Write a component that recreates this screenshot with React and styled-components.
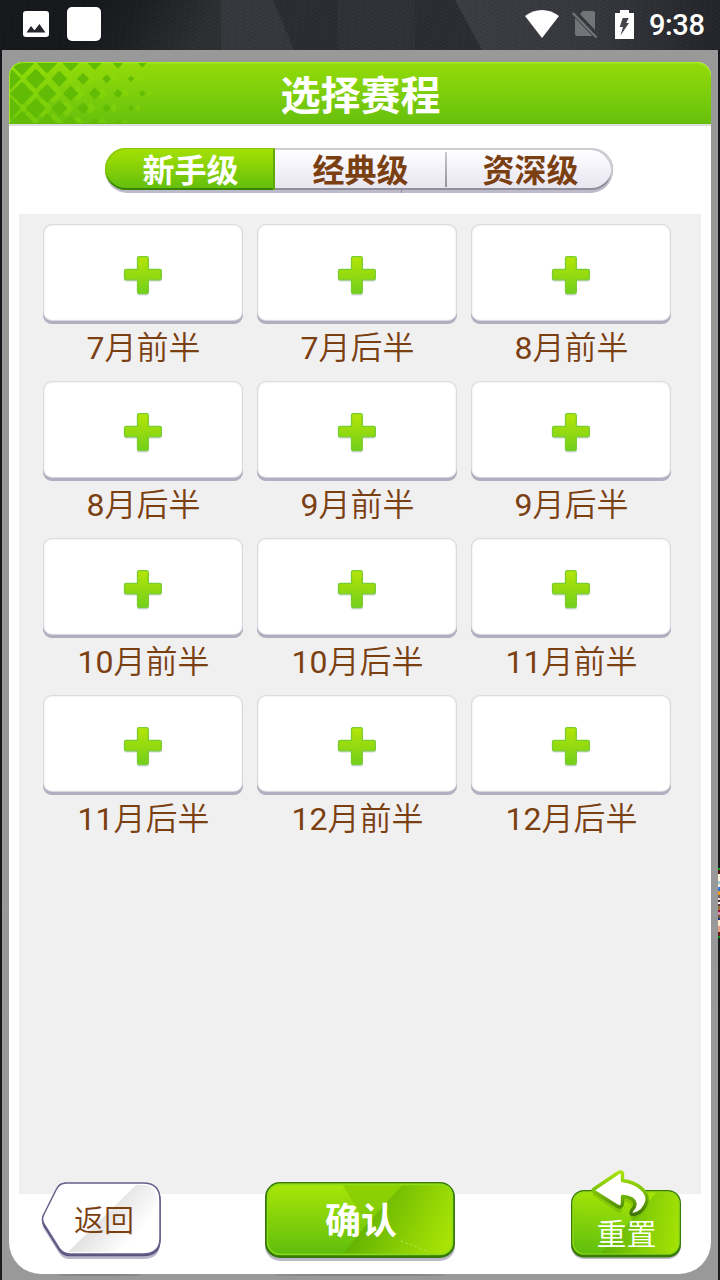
import React from "react";
import styled, { createGlobalStyle, css } from "styled-components";

const GlobalStyle = createGlobalStyle`
  *, *::before, *::after { box-sizing: border-box; }
  html, body { margin: 0; padding: 0; height: 1280px; overflow: hidden; background: #15161b; }
  body { font-family: Roboto, "Noto Sans CJK SC", sans-serif; color: #7b4012; }
  button { font: inherit; color: inherit; border: 0; padding: 0; background: none; }
`;

const Screen = styled.div`
  position: relative;
  width: 720px;
  height: 1280px;
  display: flex;
  flex-direction: column;
  overflow: hidden;
  background:
    repeating-linear-gradient(178deg, rgba(255,255,255,.03) 0 1px, transparent 1px 4px),
    linear-gradient(#15161b, #18191c);
`;

const StatusBar = styled.header`
  position: relative;
  height: 50px;
  flex: none;
  display: flex;
  align-items: center;
  justify-content: space-between;
  padding: 0 17px 2px 23px;
`;

const Wallpaper = styled.svg`
  position: absolute;
  inset: 0;
`;

const StatusGroup = styled.div`
  position: relative;
  display: flex;
  align-items: center;
  gap: ${(p) => p.$gap}px;
`;

const AppTile = styled.span`
  width: 34px;
  height: 34px;
  border-radius: 5px;
  background: #fff;
`;

const Clock = styled.time`
  width: 54px;
  margin-left: 5px;
  padding-top: 2px;
  font: 500 29px/34px Roboto, sans-serif;
  letter-spacing: -.4px;
  color: #fff;
  white-space: nowrap;
`;

const Backdrop = styled.main`
  flex: 1;
  margin: 0 2px;
  padding: 12px 7px 6px;
  display: flex;
  background: #999;
`;

const Dialog = styled.section`
  flex: 1;
  display: flex;
  flex-direction: column;
  overflow: hidden;
  border-radius: 14px 14px 32px 32px;
  background: #fff;
`;

const TitleBar = styled.div`
  position: relative;
  height: 62px;
  flex: none;
  display: flex;
  justify-content: center;
  border-radius: 14px 14px 0 0;
  background: linear-gradient(#94dc09, #67c00d);
  box-shadow: inset 0 1px #a9ef20, inset 0 2px 1px #9ce316, inset 0 -1px #62b80e, 0 2px #dedede;
`;

const TitlePattern = styled.svg`
  position: absolute;
  inset: 0 auto auto 0;
  border-top-left-radius: 14px;
`;

const Title = styled.h1`
  position: relative;
  margin: 0;
  padding: 3px 0 0 1px;
  font-size: 40px;
  line-height: 64px;
  font-weight: 700;
  color: #fff;
`;

const Tabs = styled.nav`
  position: relative;
  height: 45px;
  width: 508px;
  flex: none;
  margin: 24px 0 0 96px;
  padding-bottom: 3px;
  display: flex;
  border-radius: 23px;
  background: #bdbacb;

  &::after {
    content: "";
    position: absolute;
    left: 296px;
    bottom: 0;
    width: 1px;
    height: 3px;
    background: #8d8b99;
  }
`;

const Tab = styled.button`
  position: relative;
  width: ${(p) => p.$width}px;
  height: 42px;
  padding-top: 4px;
  font-size: 32px;
  line-height: 38px;
  font-weight: 700;
  background: linear-gradient(#fff, #f7f6fb 35%, #e6e4ee);
  box-shadow: inset 0 2px #cecdd3, inset 0 -2px #918f9c;

  ${(p) => p.$active && css`
    color: #fff;
    padding-left: 1px;
    border-radius: 21px 0 0 21px;
    background: linear-gradient(#a3e106, #93d706 30%, #60bd0d);
    box-shadow: inset 1px 1px #87c506, inset -2px 0 #5eaa0b, inset 0 -2px #398406;
  `}

  ${(p) => p.$divided && css`
    &::after {
      content: "";
      position: absolute;
      right: -1px;
      top: 4px;
      z-index: 1;
      width: 2px;
      height: 35px;
      background: linear-gradient(#cbcad2, #94929b);
    }
  `}

  ${(p) => p.$last && css`
    padding-left: 2px;
    border-radius: 0 21px 21px 0;
    box-shadow: inset -2px 2px #cecdd3, inset -1px -2px #918f9c;
  `}
`;

const Schedule = styled.div`
  height: 980px;
  flex: none;
  margin: 21px 10px 0;
  padding: 10px 30px 0 24px;
  display: grid;
  grid-template-columns: repeat(3, 200px);
  grid-auto-rows: 157px;
  align-content: start;
  column-gap: 14px;
  background: #f0f0f0;
`;

const Slot = styled.div`
  display: flex;
  flex-direction: column;
  align-items: center;
`;

const SlotCard = styled.button`
  width: 200px;
  height: 100px;
  padding-top: 3px;
  display: flex;
  align-items: center;
  justify-content: center;
  border-radius: 9px;
  background: #fff;
  box-shadow: inset 0 -3px #b1aebf, inset 0 -4px 1px #d4d2dc, inset 0 0 0 1px #dcdcdc, inset 0 0 2px 1px #dcdcdc;
`;

const SlotLabel = styled.div`
  height: 57px;
  padding-left: 1px;
  font-size: 32px;
  line-height: 49px;
  font-weight: 350;
  white-space: nowrap;
`;

const MonthNumber = styled.span`
  font-weight: 400;
`;

const Footer = styled.footer`
  flex: 1;
  position: relative;
  display: grid;
  grid-template-columns: 224px 306px 110px;
  align-items: start;
  padding-left: 32px;
`;

const Action = styled.button`
  position: relative;
  width: ${(p) => p.$width}px;
  height: ${(p) => p.$height}px;
  margin-top: ${(p) => p.$top}px;

  > svg {
    display: block;
    overflow: visible;
  }
`;

const ActionLabel = styled.span`
  position: absolute;
  left: ${(p) => p.$x || 0}px;
  right: 0;
  top: ${(p) => p.$y}px;
  text-align: center;
  font-size: ${(p) => p.$size}px;
  line-height: 40px;
  font-weight: ${(p) => p.$weight || 350};
  color: ${(p) => p.$color || "#fff"};
`;

const BottomShade = styled.span`
  position: absolute;
  left: ${(p) => p.$left}px;
  bottom: 4px;
  width: ${(p) => p.$width}px;
  height: 2px;
  border-radius: 50%;
  background: #858585;
`;

const EdgeSprite = styled.div`
  position: absolute;
  right: 0;
  top: 868px;
  width: 2px;
  height: 70px;
  background: linear-gradient(
    #00a519 0 2px, #501515 2px 6px, #fff5dd 6px 13px, #9bc6d2 13px 16px,
    #f8f1e2 16px 19px, #3475d2 19px 23px, #f29a11 23px 27px, #725861 27px 30px,
    #ead8cf 30px 32px, #48272d 32px 34px, #fff 34px 36px, #573638 36px 38px,
    #9f6c38 38px 42px, #990e3b 42px 44px, #d68ba1 44px 47px, #744f35 47px 50px,
    #17348e 50px 52px, #ffe9d1 52px 58px, #e39c84 58px 64px, #631a14 64px 68px,
    #009a19 68px
  );
`;

function WallpaperFacets() {
  return (
    <Wallpaper width="720" height="50" viewBox="0 0 720 50">
      <defs>
        <linearGradient id="wallLeft" gradientUnits="userSpaceOnUse" x1="95" y1="0" x2="190" y2="55">
          <stop stopColor="#16171b" />
          <stop offset=".4" stopColor="#1d1e22" />
          <stop offset="1" stopColor="#2c2e32" />
        </linearGradient>
        <linearGradient id="wallRight">
          <stop stopColor="#3b3d42" />
          <stop offset=".55" stopColor="#35373c" />
          <stop offset="1" stopColor="#222429" />
        </linearGradient>
        <pattern id="weave" width="7" height="4" patternUnits="userSpaceOnUse" patternTransform="rotate(4)">
          <path d="M0 .5H4M3 2.5H7" stroke="#fff" opacity=".025" />
          <path d="M4 1.5H6M0 3.5H2" stroke="#000" opacity=".12" />
        </pattern>
      </defs>
      <rect width="720" height="50" fill="#2b2c31" />
      <path d="M0 0H221V50H0z" fill="url(#wallLeft)" />
      <path d="M221 0H273L294 50H221z" fill="#35373c" />
      <path d="M338 0H415V50H338z" fill="#303136" />
      <path d="M455 0H720V50H482z" fill="url(#wallRight)" />
      <rect width="720" height="50" fill="url(#weave)" />
    </Wallpaper>
  );
}

const diamonds = [
  [22, 31.5, 11.7], [47, 31.5, 9.5], [70.7, 31.5, 7.7], [94.7, 31.5, 6], [118, 31.5, 4.6], [142.3, 31.5, 3.2],
  [10, 16.8, 11], [35.7, 16.8, 10], [59.3, 16.8, 8], [83, 16.8, 6], [106.7, 16.8, 4.5], [131, 16.8, 3.1],
  [10, 46.3, 11], [35.7, 46.3, 10], [59.3, 46.3, 8], [83, 46.3, 6], [106.7, 46.3, 4.2], [131, 46.3, 3],
  [22, 1.5, 12], [47, 1.5, 10], [70.7, 1.5, 8], [94.7, 1.5, 6.5], [118, 1.5, 5], [142.3, 1.5, 4],
  [22, 61, 12], [47, 61, 9.5], [70.7, 61, 7], [94.7, 61, 5], [118, 61, 3.5],
];

const diamondPath = (x, y, r) => `M${x - 9} ${y - r}l${r} ${r}l${-r} ${r}l${-r} ${-r}z`;

function DiamondPattern() {
  return (
    <TitlePattern width="160" height="61" viewBox="0 0 160 61">
      {diamonds.map(([x, y, r], i) => (
        <path key={`glow-${i}`} d={diamondPath(x + 7, y, r)} fill="#8edf09" opacity=".35" />
      ))}
      {diamonds.map(([x, y, r], i) => (
        <path key={i} d={diamondPath(x, y, r)} fill="#62bb04" />
      ))}
      <path d="M.5 62V14A13.5 13.5 0 0 1 14 .5H160" fill="none" stroke="#a0e91a" />
    </TitlePattern>
  );
}

function PictureIcon() {
  return (
    <svg width="26" height="26" viewBox="0 0 26 26">
      <rect width="26" height="26" rx="3" fill="#fff" />
      <path d="M3.5 21.5 8 15l3.5 4.3L16.4 13l6.1 8.5z" fill="#24262b" />
    </svg>
  );
}

function WifiIcon() {
  return (
    <svg width="34" height="28" viewBox="0 0 34 28">
      <path d="M0 6C10-2 24-2 34 6L17 28z" fill="#fff" />
    </svg>
  );
}

function NoSimIcon() {
  return (
    <svg width="26" height="28" viewBox="0 0 26 28">
      <path d="M8 4 11 1H21a2 2 0 0 1 2 2V20zM3 8 20.5 26H5a2 2 0 0 1-2-2z" fill="#737478" />
      <path d="m.8 3 23.7 24.5" stroke="#737478" strokeWidth="2.2" />
    </svg>
  );
}

function BatteryIcon() {
  return (
    <svg width="19" height="29" viewBox="0 0 19 29">
      <path d="M5 0H14V3H19V29H0V3H5z" fill="#fff" />
      <path d="M7.7 8H13.7L11.2 13H14L5.5 25.5 8 17H4.7z" fill="#44464b" />
    </svg>
  );
}

function PlusIcon() {
  return (
    <svg width="40" height="42" viewBox="0 0 40 42">
      <defs>
        <linearGradient id="plusFill" x2="0" y2="1">
          <stop stopColor="#b5e506" />
          <stop offset="1" stopColor="#72cf1b" />
        </linearGradient>
      </defs>
      <path d="M15.5 2H24Q26 2 26 4V14H37Q39 14 39 16V24Q39 26.5 37 26.5H26V38Q26 40.5 24 40.5H16Q14 40.5 14 38V26.5H3Q1 26.5 1 24V16Q1 14 3 14H14V4Q14 2 16 2z" fill="#d3d8e2" />
      <path d="M16 1.7H23.6Q25.3 1.7 25.3 3.4V14.3H36.7Q38.3 14.3 38.3 16V23Q38.3 24.8 36.7 24.8H25.3V36.8Q25.3 38.5 23.6 38.5H16Q14.5 38.5 14.5 36.8V24.8H3.2Q1.5 24.8 1.5 23V16Q1.5 14.3 3.2 14.3H14.5V3.4Q14.5 1.7 16 1.7z" fill="url(#plusFill)" stroke="#79cd30" strokeWidth="1.3" />
    </svg>
  );
}

function BackShape() {
  const d = "M23 1H102Q119 1 119 18V56Q119 72 102 72H29Q22 72 18 66L3 42Q0 37 3 32L15 8Q18 1 25 1z";
  return (
    <svg width="120" height="80" viewBox="0 0 120 80">
      <defs>
        <linearGradient id="backShine" gradientUnits="userSpaceOnUse" x1="55" y1="30" x2="90" y2="60">
          <stop stopColor="#dedede" />
          <stop offset="1" stopColor="#fff" />
        </linearGradient>
      </defs>
      <path d={d} transform="translate(0 5)" fill="#b9b5cb" />
      <path d={d} transform="translate(0 1.5)" fill="#5a537a" stroke="#5a537a" strokeWidth="1.5" />
      <path d={d} fill="#fff" stroke="#66608a" strokeWidth="1.5" />
      <path d="M95 3H104Q116 4 116 18V55Q116 70 102 70H27z" fill="url(#backShine)" />
    </svg>
  );
}

function ConfirmShape() {
  return (
    <svg width="190" height="80" viewBox="0 0 190 80">
      <defs>
        <linearGradient id="confirmBase" x2="0" y2="1">
          <stop stopColor="#a9e607" />
          <stop offset="1" stopColor="#5fbd0d" />
        </linearGradient>
        <linearGradient id="confirmRight" gradientUnits="userSpaceOnUse" x1="102" y1="25" x2="184" y2="60">
          <stop stopColor="#65b402" />
          <stop offset="1" stopColor="#a9e405" />
        </linearGradient>
      </defs>
      <rect x="0" y="5" width="190" height="74" rx="15" fill="#bbb7ca" />
      <rect width="190" height="76" rx="15" fill="#377807" />
      <rect x="2" y="1.5" width="186" height="71.5" rx="13" fill="url(#confirmBase)" />
      <path d="M138 2H176Q188 3 188 15V60Q188 72 175 73H77L102 42z" fill="url(#confirmRight)" />
      <path d="M77 2H138L102 42z" fill="#81c802" opacity=".65" />
      <rect x="2.5" y="2.5" width="185" height="70" rx="12.5" fill="none" stroke="#8bdc1a" strokeWidth="1.5" />
      <path d="m136 59 24 9 4 3" fill="none" stroke="#cdf194" strokeWidth=".7" strokeDasharray="2 3" />
    </svg>
  );
}

function ResetShape() {
  return (
    <svg width="110" height="90" viewBox="0 0 110 90">
      <defs>
        <linearGradient id="resetBase" x1=".2" x2="0" y2="1">
          <stop stopColor="#a4e307" />
          <stop offset="1" stopColor="#5dbd0e" />
        </linearGradient>
        <linearGradient id="resetRight" x1=".1" y1=".5" x2="1" y2=".6">
          <stop stopColor="#61b506" />
          <stop offset="1" stopColor="#a4e205" />
        </linearGradient>
        <linearGradient id="arrowEdge" x2="0" y2="1">
          <stop stopColor="#a8e408" />
          <stop offset=".5" stopColor="#77bd08" />
          <stop offset="1" stopColor="#3f7306" />
        </linearGradient>
      </defs>
      <rect y="22" width="110" height="67" rx="13" fill="#c4c0d0" />
      <rect y="20" width="110" height="67.500" rx="13" fill="#397b07" />
      <rect x="1.5" y="21.5" width="107" height="63" rx="11.5" fill="url(#resetBase)" />
      <path d="M86 22H97Q108 22 108 34V72Q108 84 96 84H29z" fill="url(#resetRight)" />
      <rect x="2" y="22" width="106" height="62" rx="11" fill="none" stroke="#8fda18" strokeWidth="1.2" />
      <path d="M22 19.5 46 2.5Q51-1 51 5V10C67 12 77 22 75 32Q73 42 62 45Q59 45 59 40Q65 38 60 31Q56 26 51 28V33Q52 40 46 38L23 22Q20 20 22 19.5z" fill="#4c8906" opacity=".25" transform="translate(0 4)" />
      <path d="M23 19 46 3.500Q51 0 51.5 4V10.500C67 12.500 77.5 22 76 31Q73 42 63 44.5Q58 45 61 40Q67 34 61 29Q57 26.500 51.500 26.500V33Q51 39 46 36L23 21.500Q21 20 23 19z" fill="#fff" stroke="url(#arrowEdge)" strokeWidth="3.4" strokeLinejoin="round" />
    </svg>
  );
}

const periods = [
  [7, "月前半"], [7, "月后半"], [8, "月前半"],
  [8, "月后半"], [9, "月前半"], [9, "月后半"],
  [10, "月前半"], [10, "月后半"], [11, "月前半"],
  [11, "月后半"], [12, "月前半"], [12, "月后半"],
];

export default function App() {
  return (
    <>
      <GlobalStyle />
      <Screen>
        <StatusBar>
          <WallpaperFacets />
          <StatusGroup $gap={18}>
            <PictureIcon />
            <AppTile />
          </StatusGroup>
          <StatusGroup $gap={10}>
            <StatusGroup $gap={13}>
              <WifiIcon />
              <StatusGroup $gap={17}>
                <NoSimIcon />
                <BatteryIcon />
              </StatusGroup>
            </StatusGroup>
            <Clock>9:38</Clock>
          </StatusGroup>
        </StatusBar>
        <Backdrop>
          <Dialog>
            <TitleBar>
              <DiamondPattern />
              <Title>选择赛程</Title>
            </TitleBar>
            <Tabs>
              <Tab $active $width={170}>新手级</Tab>
              <Tab $divided $width={171}>经典级</Tab>
              <Tab $last $width={167}>资深级</Tab>
            </Tabs>
            <Schedule>
              {periods.map(([month, half]) => (
                <Slot key={month + half}>
                  <SlotCard>
                    <PlusIcon />
                  </SlotCard>
                  <SlotLabel><MonthNumber>{month}</MonthNumber>{half}</SlotLabel>
                </Slot>
              ))}
            </Schedule>
            <Footer>
              <Action $width={120} $height={80} $top={-12}>
                <BackShape />
                <ActionLabel $size={30} $x={6} $y={19} $color="#7b4012">返回</ActionLabel>
              </Action>
              <Action $width={190} $height={80} $top={-12}>
                <ConfirmShape />
                <ActionLabel $size={36} $weight={700} $x={2} $y={20}>确认</ActionLabel>
              </Action>
              <Action $width={110} $height={90} $top={-24}>
                <ResetShape />
                <ActionLabel $size={30} $x={1} $y={45}>重置</ActionLabel>
              </Action>
            </Footer>
          </Dialog>
        </Backdrop>
        <BottomShade $left={57} $width={85} />
        <BottomShade $left={274} $width={172} />
        <EdgeSprite />
      </Screen>
    </>
  );
}
